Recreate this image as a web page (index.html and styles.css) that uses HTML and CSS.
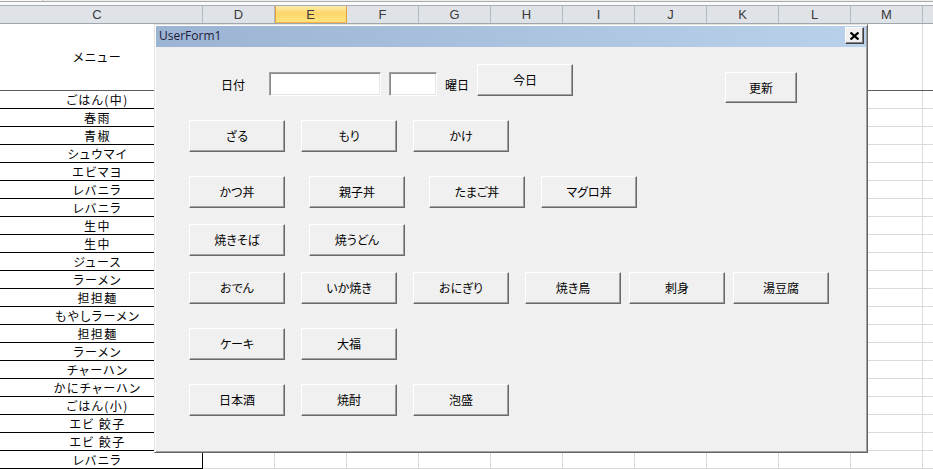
FILE: index.html
```html
<!DOCTYPE html>
<html lang="ja">
<head>
<meta charset="utf-8">
<title>UserForm1</title>
<link rel="stylesheet" href="styles.css">
</head>
<body>
<div class="excel">
  <div class="topstrip"><div class="namebox"></div></div>
  <div class="hdr">
    <div class="h hc">C</div>
    <div class="h">D</div>
    <div class="h sel">E</div>
    <div class="h">F</div>
    <div class="h">G</div>
    <div class="h">H</div>
    <div class="h">I</div>
    <div class="h">J</div>
    <div class="h">K</div>
    <div class="h">L</div>
    <div class="h">M</div>
    <div class="h hlast"></div>
  </div>
  <div class="row r1"><div class="c">メニュー</div><div class="rest"></div></div>
  <div class="row"><div class="c">ごはん(中)</div><div class="rest"></div></div>
  <div class="row"><div class="c">春雨</div><div class="rest"></div></div>
  <div class="row"><div class="c">青椒</div><div class="rest"></div></div>
  <div class="row"><div class="c">シュウマイ</div><div class="rest"></div></div>
  <div class="row"><div class="c">エビマヨ</div><div class="rest"></div></div>
  <div class="row"><div class="c">レバニラ</div><div class="rest"></div></div>
  <div class="row"><div class="c">レバニラ</div><div class="rest"></div></div>
  <div class="row"><div class="c">生中</div><div class="rest"></div></div>
  <div class="row"><div class="c">生中</div><div class="rest"></div></div>
  <div class="row"><div class="c">ジュース</div><div class="rest"></div></div>
  <div class="row"><div class="c">ラーメン</div><div class="rest"></div></div>
  <div class="row"><div class="c">担担麺</div><div class="rest"></div></div>
  <div class="row"><div class="c">もやしラーメン</div><div class="rest"></div></div>
  <div class="row"><div class="c">担担麺</div><div class="rest"></div></div>
  <div class="row"><div class="c">ラーメン</div><div class="rest"></div></div>
  <div class="row"><div class="c">チャーハン</div><div class="rest"></div></div>
  <div class="row"><div class="c">かにチャーハン</div><div class="rest"></div></div>
  <div class="row"><div class="c">ごはん(小)</div><div class="rest"></div></div>
  <div class="row"><div class="c">エビ 餃子</div><div class="rest"></div></div>
  <div class="row"><div class="c">エビ 餃子</div><div class="rest"></div></div>
  <div class="row"><div class="c">レバニラ</div><div class="rest"></div></div>

  <div class="form">
    <div class="title">
      <span class="title-text">UserForm1</span>
      <div class="close"><svg width="9" height="8" viewBox="0 0 9 8"><path d="M0.5 0.5L8.5 7.5M8.5 0.5L0.5 7.5" stroke="#000" stroke-width="2.2" fill="none"/></svg></div>
    </div>
    <div class="fbody">
      <div class="frow">
        <span class="lbl l1">日付</span>
        <span class="tb tb1"></span>
        <span class="tb tb2"></span>
        <span class="lbl l2">曜日</span>
        <button class="btn today">今日</button>
        <button class="btn upd">更新</button>
      </div>
      <div class="frow mt24">
        <button class="btn">ざる</button>
        <button class="btn g16">もり</button>
        <button class="btn g16">かけ</button>
      </div>
      <div class="frow mt24">
        <button class="btn">かつ丼</button>
        <button class="btn g24">親子丼</button>
        <button class="btn g24">たまご丼</button>
        <button class="btn g16">マグロ丼</button>
      </div>
      <div class="frow mt16">
        <button class="btn">焼きそば</button>
        <button class="btn g24">焼うどん</button>
      </div>
      <div class="frow mt16">
        <button class="btn">おでん</button>
        <button class="btn g16">いか焼き</button>
        <button class="btn g16">おにぎり</button>
        <button class="btn g16">焼き鳥</button>
        <button class="btn g8">刺身</button>
        <button class="btn g8">湯豆腐</button>
      </div>
      <div class="frow mt24">
        <button class="btn">ケーキ</button>
        <button class="btn g16">大福</button>
      </div>
      <div class="frow mt24">
        <button class="btn">日本酒</button>
        <button class="btn g16">焼酎</button>
        <button class="btn g16">泡盛</button>
      </div>
    </div>
  </div>
</div>
</body>
</html>
```
FILE: styles.css
```css
html, body {
  margin: 0;
  padding: 0;
  background: #fff;
}
body {
  width: 933px;
  height: 469px;
  overflow: hidden;
  font-family: "Noto Sans CJK JP", sans-serif;
}
.excel {
  position: relative;
  width: 933px;
  height: 469px;
  overflow: hidden;
}
.topstrip {
  height: 6px;
  box-sizing: border-box;
  border-bottom: 1px solid #a7adb5;
  background: linear-gradient(#eceef1 0 1px, #a9abae 1px 2px, #fafafa 2px);
}
.namebox {
  width: 42px;
  height: 1px;
  background: #f8f8f8;
  border-right: 1px solid #c4c4c4;
}
.hdr {
  display: flex;
  height: 18px;
  box-sizing: border-box;
  background: #dfe3e8;
  border-bottom: 1px solid #9ea6b0;
}
.h {
  flex: none;
  width: 72px;
  box-sizing: border-box;
  border-right: 1px solid #b3bac3;
  text-align: center;
  font: 13px/17px "Liberation Sans", sans-serif;
  color: #3a3a3a;
}
.hc {
  width: 203px;
  text-indent: -8px;
}
.sel {
  background: linear-gradient(#fce9ad, #fdd66a 45%, #ffe37e);
  border-right-color: #e1a23a;
  box-shadow: inset 1px 0 0 #e1a23a;
  border-bottom: 1px solid #f0b347;
}
.hlast {
  flex: 1;
  border-right: 0;
}
.row {
  display: flex;
  height: 18px;
}
.c {
  flex: none;
  width: 203px;
  box-sizing: border-box;
  border-right: 1px solid #000;
  border-bottom: 1px solid #000;
  padding-right: 7px;
  text-align: center;
  font-size: 12px;
  line-height: 17px;
  letter-spacing: 1.4px;
  font-feature-settings: "palt";
  color: #000;
  white-space: nowrap;
}
.rest {
  flex: 1;
  border-bottom: 1px solid #dadada;
  background-image: repeating-linear-gradient(to right, transparent 0 71px, #dadada 71px 72px);
}
.r1 {
  height: 67px;
}
.r1 .c {
  line-height: 66px;
  border-bottom-color: #5c5c5c;
}
.r1 .rest {
  border-bottom-color: #5c5c5c;
}

/* UserForm window */
.form {
  position: absolute;
  left: 154px;
  top: 24px;
  width: 714px;
  height: 429px;
  box-sizing: border-box;
  border: 1px solid;
  border-color: #e3e3e3 #646464 #646464 #e3e3e3;
  box-shadow: inset 1px 1px 0 #ffffff, inset -1px -1px 0 #a0a0a0;
  padding: 1px;
  background: #f0f0f0;
  display: flex;
  flex-direction: column;
}
.title {
  flex: none;
  height: 21px;
  display: flex;
  align-items: flex-start;
  background: linear-gradient(to right, #9cb4d3, #b9d1ea);
  padding-left: 3px;
}
.title-text {
  font: 12px/19px "Open Sans", sans-serif;
  color: #1e1b3a;
}
.close {
  margin-left: auto;
  margin-top: 1px;
  margin-right: 2px;
  width: 19px;
  height: 17px;
  box-sizing: border-box;
  background: #f0f0f0;
  border: 1px solid;
  border-color: #ffffff #404040 #404040 #ffffff;
  box-shadow: inset -1px -1px 0 #808080;
  display: flex;
  align-items: center;
  justify-content: center;
}
.fbody {
  flex: 1;
  padding: 17px 0 0 33px;
  display: flex;
  flex-direction: column;
}
.frow {
  flex: none;
  height: 32px;
  display: flex;
  align-items: flex-start;
}
.mt24 { margin-top: 24px; }
.mt16 { margin-top: 16px; }
.g8 { margin-left: 8px; }
.g16 { margin-left: 16px; }
.g24 { margin-left: 24px; }

.btn {
  flex: none;
  width: 96px;
  height: 32px;
  margin-top: 0;
  margin-bottom: 0;
  padding: 0;
  box-sizing: border-box;
  background: #f0f0f0;
  border: 1px solid;
  border-color: #ffffff #696969 #696969 #ffffff;
  box-shadow: inset -1px -1px 0 #a0a0a0;
  border-radius: 0;
  font: 12px/1 "Noto Sans CJK JP", sans-serif;
  font-feature-settings: "palt";
  color: #000;
  display: flex;
  align-items: center;
  justify-content: center;
}
.lbl {
  flex: none;
  width: 24px;
  height: 24px;
  margin-top: 8px;
  font: 12px/25px "Noto Sans CJK JP", sans-serif;
  color: #000;
  white-space: nowrap;
}
.l1 { margin-left: 32px; }
.l2 { margin-left: 8px; }
.tb {
  flex: none;
  height: 24px;
  margin-top: 8px;
  box-sizing: border-box;
  background: #fff;
  border: 1px solid;
  border-color: #a0a0a0 #ffffff #ffffff #a0a0a0;
  box-shadow: inset 1px 1px 0 #8a8a8a, inset -1px -1px 0 #e3e3e3;
}
.tb1 { width: 112px; margin-left: 24px; }
.tb2 { width: 48px; margin-left: 8px; }
.today { margin-left: 8px; }
.upd {
  width: 72px;
  height: 31px;
  margin-left: 152px;
  margin-top: 8px;
}
```
